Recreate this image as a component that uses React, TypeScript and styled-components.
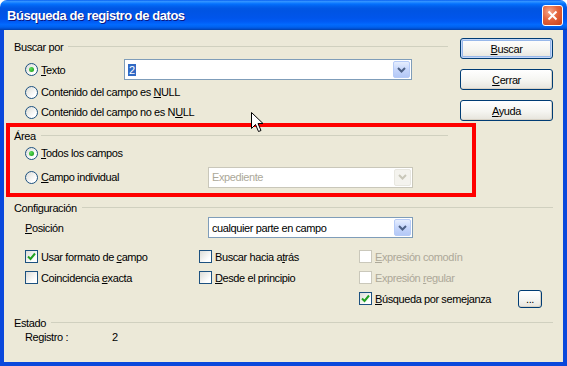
import React from 'react';
import styled, { createGlobalStyle, css } from 'styled-components';

const GlobalStyle = createGlobalStyle`
  html, body {
    margin: 0;
    padding: 0;
    background: #ffffff;
  }
  body {
    font-family: 'Liberation Sans', Arial, sans-serif;
    font-size: 11px;
    letter-spacing: -0.4px;
    color: #000000;
  }
`;

const Window = styled.div`
  position: relative;
  width: 567px;
  height: 366px;
  display: flex;
  flex-direction: column;
  overflow: hidden;
  border-radius: 7px 7px 0 0;
`;

const TitleBar = styled.div`
  flex: none;
  height: 30px;
  box-sizing: border-box;
  display: flex;
  align-items: center;
  justify-content: space-between;
  padding: 0 4px 0 7px;
  background: linear-gradient(
    to bottom,
    #0058ee 0%,
    #3593ff 4%,
    #288eff 7%,
    #127dff 10%,
    #036ffc 14%,
    #0262ee 20%,
    #0057e5 28%,
    #0054e3 36%,
    #0055eb 60%,
    #005bf5 72%,
    #026afe 82%,
    #0062ef 90%,
    #0052d6 95%,
    #0040ab 100%
  );
`;

const TitleText = styled.span`
  color: #ffffff;
  font-weight: bold;
  font-size: 13px;
  letter-spacing: -0.45px;
  text-shadow: 1px 1px 0 #0a1883;
`;

const CloseButton = styled.span`
  width: 21px;
  height: 21px;
  box-sizing: border-box;
  border: 1px solid #ffffff;
  border-radius: 3px;
  background: radial-gradient(circle at 35% 30%, #f5a78c 0%, #e4643c 45%, #c8401a 100%);
  display: flex;
  align-items: center;
  justify-content: center;
`;

const Frame = styled.div`
  flex: 1;
  background: #ece9d8;
  border-style: solid;
  border-color: #0a48dc;
  border-width: 0 4px 4px 4px;
  padding: 8px 10px 0;
  display: flex;
  flex-direction: column;
`;

const TopRow = styled.div`
  display: flex;
  gap: 12px;
`;

const LeftColumn = styled.div`
  width: 434px;
  padding-top: 2px;
  display: flex;
  flex-direction: column;
`;

const ButtonColumn = styled.div`
  width: 93px;
  display: flex;
  flex-direction: column;
  gap: 10px;
`;

const Group = styled.section<{ $gap?: number }>`
  position: relative;
  display: flex;
  flex-direction: column;
  margin-top: ${({ $gap }) => $gap ?? 0}px;
`;

const GroupHeader = styled.div`
  height: 13px;
  display: flex;
  align-items: center;
  gap: 5px;
  &::after {
    content: '';
    flex: 1;
    height: 1px;
    background: #d0d0bf;
  }
`;

const GroupBody = styled.div`
  padding-left: 11px;
  display: flex;
  flex-direction: column;
`;

const Row = styled.div<{ $h: number; $top?: number }>`
  height: ${({ $h }) => $h}px;
  margin-top: ${({ $top }) => $top ?? 0}px;
  display: flex;
  align-items: center;
`;

const Cell = styled.div<{ $w?: number }>`
  width: ${({ $w }) => ($w ? `${$w}px` : 'auto')};
  flex: none;
  display: flex;
  align-items: center;
`;

const Label = styled.span<{ $disabled?: boolean }>`
  margin-left: 3px;
  white-space: nowrap;
  color: ${({ $disabled }) => ($disabled ? '#aca899' : '#000000')};
`;

const PlainLabel = styled.span`
  white-space: nowrap;
`;

const RadioDot = styled.span<{ $checked?: boolean }>`
  width: 13px;
  height: 13px;
  flex: none;
  box-sizing: border-box;
  border-radius: 50%;
  border: 1px solid #1c5180;
  background: linear-gradient(135deg, #dcdcd7 0%, #ffffff 75%);
  display: flex;
  align-items: center;
  justify-content: center;
  ${({ $checked }) =>
    $checked &&
    css`
      &::after {
        content: '';
        width: 5px;
        height: 5px;
        border-radius: 50%;
        background: radial-gradient(circle at 35% 35%, #5ee05a 0%, #21a121 80%);
      }
    `}
`;

const CheckBox = styled.span<{ $disabled?: boolean }>`
  width: 13px;
  height: 13px;
  flex: none;
  box-sizing: border-box;
  border: 1px solid ${({ $disabled }) => ($disabled ? '#cac8bb' : '#1c5180')};
  background: ${({ $disabled }) =>
    $disabled ? '#ffffff' : 'linear-gradient(135deg, #dcdcd7 0%, #ffffff 75%)'};
  display: flex;
  align-items: center;
  justify-content: center;
`;

const Combo = styled.div<{ $w: number; $disabled?: boolean }>`
  width: ${({ $w }) => $w}px;
  height: 21px;
  flex: none;
  box-sizing: border-box;
  border: 1px solid ${({ $disabled }) => ($disabled ? '#c9c7ba' : '#7f9db9')};
  background: #ffffff;
  display: flex;
  align-items: center;
  padding: 1px;
`;

const ComboValue = styled.span<{ $disabled?: boolean }>`
  flex: 1;
  padding-left: 2px;
  white-space: nowrap;
  color: ${({ $disabled }) => ($disabled ? '#aca899' : '#000000')};
`;

const Selected = styled.span`
  background: #316ac5;
  color: #ffffff;
  padding: 0 1px;
`;

const ComboButton = styled.span<{ $disabled?: boolean }>`
  width: 17px;
  height: 17px;
  box-sizing: border-box;
  border-radius: 2px;
  border: 1px solid ${({ $disabled }) => ($disabled ? '#e8e7e0' : '#b6cbf7')};
  background: ${({ $disabled }) =>
    $disabled
      ? '#f4f3ee'
      : 'linear-gradient(to bottom, #e6eefe 0%, #c6d6fb 50%, #b3c8f6 100%)'};
  display: flex;
  align-items: center;
  justify-content: center;
`;

const PushButton = styled.button<{ $default?: boolean }>`
  width: 93px;
  height: 21px;
  padding: 0;
  font: inherit;
  letter-spacing: inherit;
  color: #000000;
  border: 1px solid #003c74;
  border-radius: 3px;
  background: linear-gradient(to bottom, #ffffff 0%, #f5f5f1 55%, #e6e4dc 100%);
  box-shadow: ${({ $default }) =>
    $default
      ? 'inset 0 0 0 1px #c4d7f8, inset 0 0 0 2px #98b8ea'
      : 'inset -1px -1px 0 #d8d2c6'};
`;

const SmallButton = styled(PushButton)`
  width: 24px;
  height: 18px;
  margin-left: auto;
  margin-right: 11px;
  line-height: 10px;
`;

const CheckGrid = styled.div`
  display: grid;
  grid-template-columns: 174px 160px 1fr;
  grid-auto-rows: 21px;
  margin-top: 8px;
`;

const GridCell = styled.div`
  display: flex;
  align-items: center;
`;

const StatusValue = styled.span`
  margin-left: 44px;
`;

const Annotation = styled.div`
  position: absolute;
  left: -8px;
  right: -28px;
  top: -6px;
  bottom: -9px;
  border: 4px solid #ff0000;
  pointer-events: none;
`;

const Pointer = styled.svg`
  position: absolute;
  left: 251px;
  top: 112px;
  z-index: 5;
`;

const Arrow: React.FC<{ disabled?: boolean }> = ({ disabled }) => (
  <svg width="9" height="6" viewBox="0 0 9 6">
    <polyline
      points="1,1 4.5,4.5 8,1"
      fill="none"
      stroke={disabled ? '#c9c7ba' : '#4d6185'}
      strokeWidth="2"
    />
  </svg>
);

const Tick = () => (
  <svg width="9" height="9" viewBox="0 0 9 9">
    <polyline points="1,4.5 3.5,7 8,1.5" fill="none" stroke="#21a121" strokeWidth="2" />
  </svg>
);

const Radio: React.FC<{ checked?: boolean; children: React.ReactNode }> = ({
  checked,
  children,
}) => (
  <Cell>
    <RadioDot $checked={checked} />
    <Label>{children}</Label>
  </Cell>
);

const Check: React.FC<{
  checked?: boolean;
  disabled?: boolean;
  children: React.ReactNode;
}> = ({ checked, disabled, children }) => (
  <>
    <CheckBox $disabled={disabled}>{checked && <Tick />}</CheckBox>
    <Label $disabled={disabled}>{children}</Label>
  </>
);

const App: React.FC = () => {
  return (
    <>
      <GlobalStyle />
      <Window>
        <TitleBar>
          <TitleText>Búsqueda de registro de datos</TitleText>
          <CloseButton>
            <svg width="11" height="11" viewBox="0 0 11 11">
              <path d="M1.5 1.5 L9.5 9.5 M9.5 1.5 L1.5 9.5" stroke="#ffffff" strokeWidth="2" />
            </svg>
          </CloseButton>
        </TitleBar>
        <Frame>
          <TopRow>
            <LeftColumn>
              <Group>
                <GroupHeader>Buscar por</GroupHeader>
                <GroupBody>
                  <Row $h={21} $top={6}>
                    <Cell $w={99}>
                      <RadioDot $checked />
                      <Label>
                        <u>T</u>exto
                      </Label>
                    </Cell>
                    <Combo $w={288}>
                      <ComboValue>
                        <Selected>2</Selected>
                      </ComboValue>
                      <ComboButton>
                        <Arrow />
                      </ComboButton>
                    </Combo>
                  </Row>
                  <Row $h={20} $top={2}>
                    <Radio>
                      Contenido del campo es <u>N</u>ULL
                    </Radio>
                  </Row>
                  <Row $h={20}>
                    <Radio>
                      Contenido del campo no es N<u>U</u>LL
                    </Radio>
                  </Row>
                </GroupBody>
              </Group>
              <Group $gap={7}>
                <GroupHeader>Área</GroupHeader>
                <GroupBody>
                  <Row $h={20} $top={1}>
                    <Radio checked>
                      <u>T</u>odos los campos
                    </Radio>
                  </Row>
                  <Row $h={22} $top={3}>
                    <Cell $w={183}>
                      <RadioDot />
                      <Label>
                        <u>C</u>ampo individual
                      </Label>
                    </Cell>
                    <Combo $w={205} $disabled>
                      <ComboValue $disabled>Expediente</ComboValue>
                      <ComboButton $disabled>
                        <Arrow disabled />
                      </ComboButton>
                    </Combo>
                  </Row>
                </GroupBody>
                <Annotation />
              </Group>
            </LeftColumn>
            <ButtonColumn>
              <PushButton $default>
                <u>B</u>uscar
              </PushButton>
              <PushButton>
                <u>C</u>errar
              </PushButton>
              <PushButton>
                <u>A</u>yuda
              </PushButton>
            </ButtonColumn>
          </TopRow>

          <Group $gap={13}>
            <GroupHeader>Configuración</GroupHeader>
            <GroupBody>
              <Row $h={21} $top={3}>
                <Cell $w={183}>
                  <PlainLabel>
                    <u>P</u>osición
                  </PlainLabel>
                </Cell>
                <Combo $w={205}>
                  <ComboValue>cualquier parte en campo</ComboValue>
                  <ComboButton>
                    <Arrow />
                  </ComboButton>
                </Combo>
              </Row>
              <CheckGrid>
                <GridCell>
                  <Check checked>
                    Usar formato de <u>c</u>ampo
                  </Check>
                </GridCell>
                <GridCell>
                  <Check>
                    Buscar hacia a<u>t</u>rás
                  </Check>
                </GridCell>
                <GridCell>
                  <Check disabled>
                    <u>E</u>xpresión comodín
                  </Check>
                </GridCell>
                <GridCell>
                  <Check>
                    Coincidencia <u>e</u>xacta
                  </Check>
                </GridCell>
                <GridCell>
                  <Check>
                    <u>D</u>esde el principio
                  </Check>
                </GridCell>
                <GridCell>
                  <Check disabled>
                    Expresión <u>r</u>egular
                  </Check>
                </GridCell>
                <GridCell />
                <GridCell />
                <GridCell>
                  <Check checked>
                    <u>B</u>úsqueda por semejanza
                  </Check>
                  <SmallButton>...</SmallButton>
                </GridCell>
              </CheckGrid>
            </GroupBody>
          </Group>

          <Group $gap={7}>
            <GroupHeader>Estado</GroupHeader>
            <GroupBody>
              <Row $h={14} $top={1}>
                <PlainLabel>Registro :</PlainLabel>
                <StatusValue>2</StatusValue>
              </Row>
            </GroupBody>
          </Group>
        </Frame>
        <Pointer width="13" height="21" viewBox="0 0 13 21">
          <path
            d="M0.5 0.5 L0.5 16.5 L4.5 12.5 L7.5 19.5 L10 18.5 L7 11.5 L12 11.5 Z"
            fill="#ffffff"
            stroke="#000000"
            strokeWidth="1"
            strokeLinejoin="miter"
          />
        </Pointer>
      </Window>
    </>
  );
};

export default App;
